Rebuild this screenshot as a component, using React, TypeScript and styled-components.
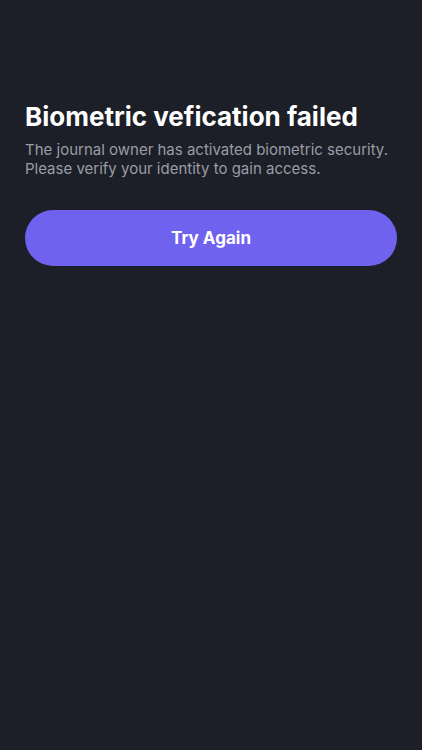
import React from 'react'
import styled, { createGlobalStyle } from 'styled-components'

const GlobalStyle = createGlobalStyle`
    html, body {
        margin: 0;
        padding: 0;
        background: #1c1f27;
    }
    body {
        font-family: Inter, "Noto Sans", sans-serif;
    }
`

const App = () => {
    return (
        <Screen>
            <GlobalStyle />
            <Header>
                <Title>Biometric vefication failed</Title>
                <Message>
                    The journal owner has activated biometric security.
                    <br />
                    Please verify your identity to gain access.
                </Message>
            </Header>
            <RetryButton type="button">Try Again</RetryButton>
        </Screen>
    )
}

export default App

const Screen = styled.div`
    min-height: 750px;
    box-sizing: border-box;
    background: #1c1f27;
    padding: 100px 25px 0;
    display: flex;
    flex-direction: column;
    gap: 32px;
`

const Header = styled.div`
    display: flex;
    flex-direction: column;
    gap: 6px;
`

const Title = styled.h1`
    margin: 0;
    font-size: 26px;
    line-height: 34px;
    font-weight: 700;
    color: #ffffff;
    letter-spacing: 0;
`

const Message = styled.p`
    margin: 0;
    font-size: 15px;
    line-height: 19px;
    color: #9a9ca6;
`

const RetryButton = styled.button`
    height: 56px;
    width: 100%;
    border: none;
    border-radius: 28px;
    background: #6f62ee;
    color: #ffffff;
    font-family: Inter, "Noto Sans", sans-serif;
    font-size: 17px;
    font-weight: 700;
    cursor: pointer;
`
